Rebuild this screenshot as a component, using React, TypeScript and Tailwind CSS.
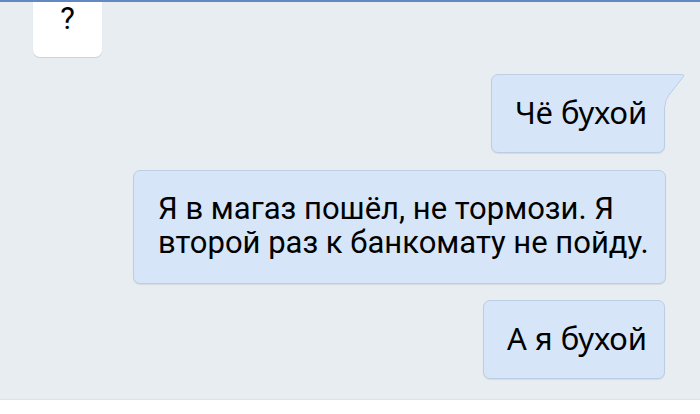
export default function App() {
  return (
    <div className="w-[700px] h-[414px] flex flex-col bg-[#e8edf2] border-t-2 border-[#6489c2] overflow-hidden">
      <div className="flex-1 flex flex-col">
        <div className="ml-[33px] w-[69px] h-[55px] bg-white rounded-b-[7px] shadow-[0_1px_1px_rgba(0,0,0,0.12)] flex justify-center">
          <span className="-mt-[1px] text-[31px] leading-[36px] text-black font-['Roboto',sans-serif]">?</span>
        </div>

        <div className="self-end mr-[35px] mt-[17px] relative">
          <div className="w-[174px] h-[79px] bg-[#d6e6f8] rounded-[7px] rounded-tr-none border border-[#bccee3] shadow-[0_1px_1px_rgba(0,0,0,0.08)] flex items-center pl-[23px] pb-[2px] text-[31px] text-black font-['Noto_Sans',sans-serif]">
            Чё бухой
          </div>
          <svg className="absolute -right-[20px] top-0" width="21" height="32" viewBox="0 0 21 32">
            <path d="M0 0.5 H18.5 Q20.5 0.5 19.5 2.5 L5 21 Q1 26 1 32 H0 Z" fill="#d6e6f8" />
            <path d="M0 0.5 H18.5 Q20.5 0.5 19.5 2.5 L5 21 Q1 26 1 32" fill="none" stroke="#bccee3" strokeWidth="1" />
          </svg>
        </div>

        <div className="ml-[133px] mt-[17px] w-[533px] h-[114px] bg-[#d6e6f8] rounded-[7px] border border-[#bccee3] shadow-[0_1px_1px_rgba(0,0,0,0.08)] pl-[24px] pt-[21px] text-[31px] leading-[34px] text-black font-['Roboto',sans-serif] whitespace-nowrap">
          Я в магаз пошёл, не тормози. Я<br />
          второй раз к банкомату не пойду.
        </div>

        <div className="self-end mr-[35px] mt-[16px] w-[182px] h-[79px] bg-[#d6e6f8] rounded-[7px] border border-[#bccee3] shadow-[0_1px_1px_rgba(0,0,0,0.08)] flex items-center pl-[23px] pb-[2px] text-[31px] text-black font-['Noto_Sans',sans-serif]">
          А я бухой
        </div>
      </div>
      <div className="h-[15px] bg-white border-t border-[#dde2e8]" />
    </div>
  );
}
